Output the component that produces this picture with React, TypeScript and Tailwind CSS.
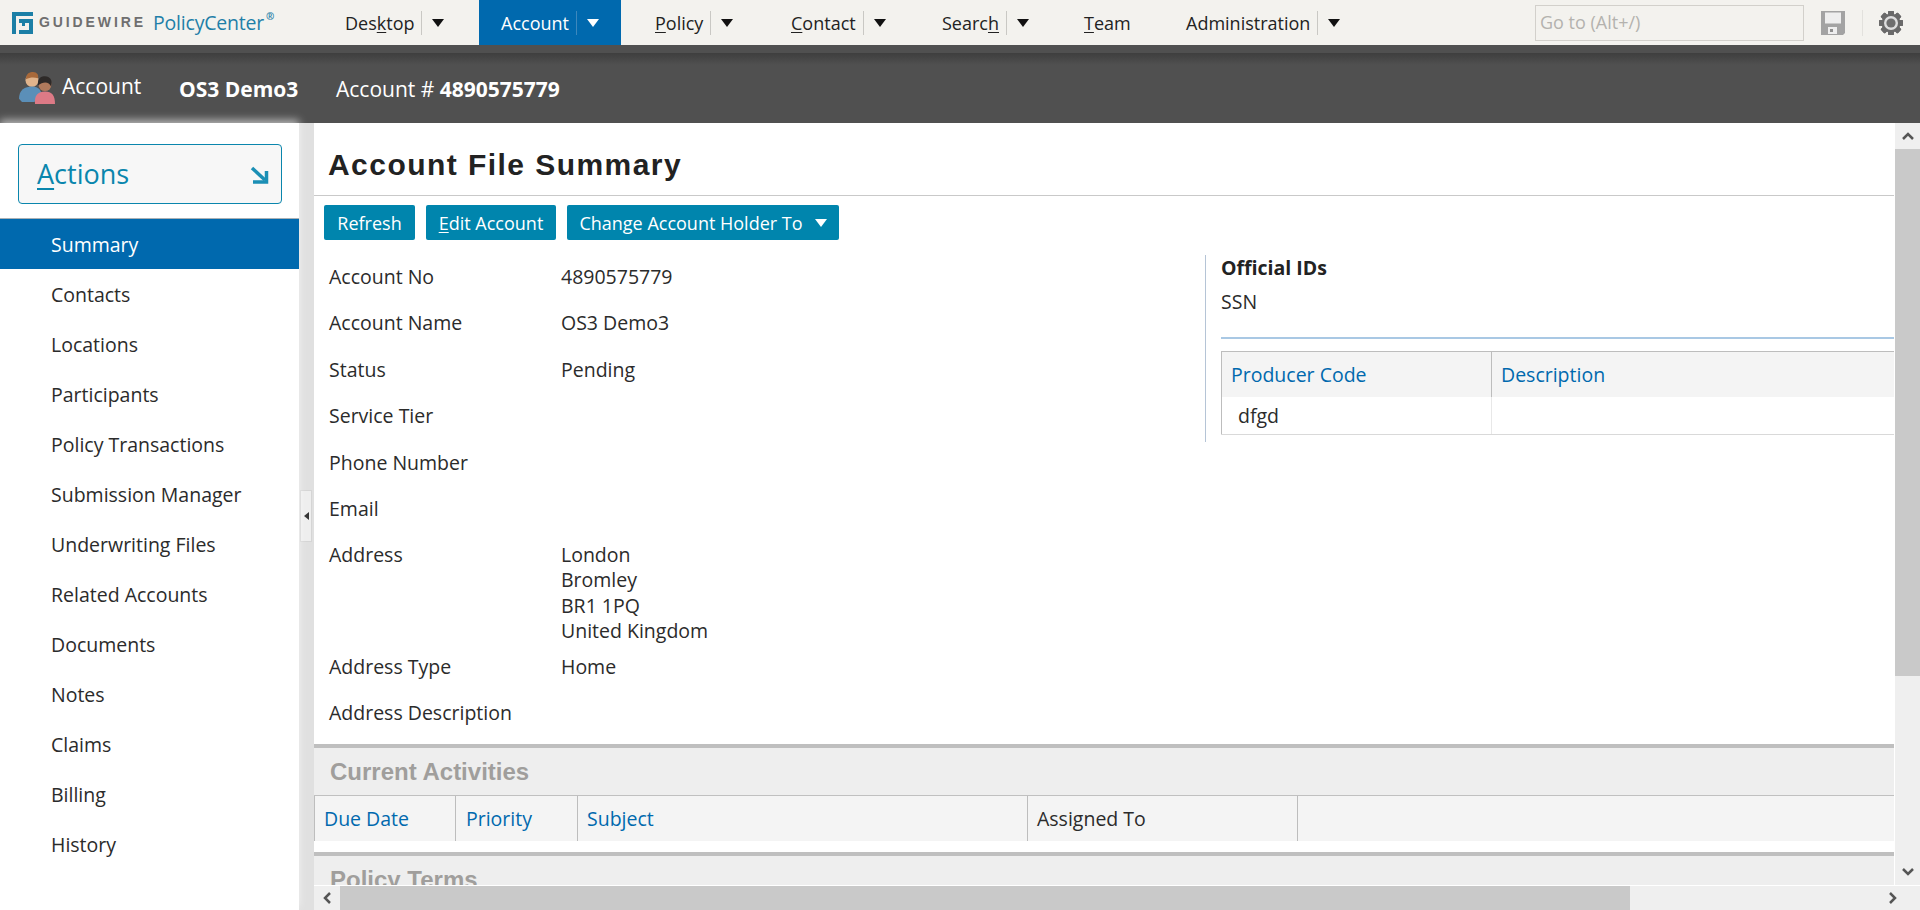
function Caret({ white }: { white?: boolean }) {
  return (
    <svg width="12" height="8" viewBox="0 0 12 8" className="block">
      <path d="M0 0H12L6 8Z" fill={white ? "#ffffff" : "#111111"} />
    </svg>
  );
}

function NavItem({
  pre,
  u,
  post,
  width,
  pad,
  caret,
  active,
}: {
  pre: string;
  u?: string;
  post?: string;
  width: string;
  pad: string;
  caret?: boolean;
  active?: boolean;
}) {
  return (
    <div className={`flex h-[45px] items-center ${width} ${pad} ${active ? "bg-[#0069ae] text-white" : "text-[#222222]"}`}>
      <span className="mt-[1px] whitespace-nowrap">
        {pre}
        {u ? <span className="underline underline-offset-2">{u}</span> : null}
        {post}
      </span>
      {caret ? (
        <>
          <span className={`ml-[7px] h-[24px] w-px ${active ? "bg-[#3d88bd]" : "bg-[#c9c8c4]"}`} />
          <span className="ml-[10px]">
            <Caret white={active} />
          </span>
        </>
      ) : null}
    </div>
  );
}

function PeopleIcon() {
  return (
    <svg width="38" height="34" viewBox="0 0 38 33" preserveAspectRatio="none" className="block">
      <circle cx="14" cy="9" r="6.5" fill="#e0b48c" />
      <path d="M8 8C8 2 12 1 15 1C19 1 21 4 20 7C16 6 12 6 8 8Z" fill="#a8693a" />
      <path d="M1 27C1 18 7 15 14 15C21 15 24 19 24 27L16 30L4 30Z" fill="#5b8fb8" />
      <circle cx="27" cy="13" r="6.5" fill="#b07a5c" />
      <path d="M20 14C19 6 24 5 27 5C32 5 35 9 33 15C31 10 25 10 20 14Z" fill="#2e2a28" />
      <path d="M17 32C16 24 20 20 27 20C34 20 37 24 37 32Z" fill="#dd7a86" />
    </svg>
  );
}

function Gear() {
  const teeth = [0, 45, 90, 135, 180, 225, 270, 315];
  return (
    <svg width="24" height="24" viewBox="0 0 24 24" className="block">
      {teeth.map((a) => (
        <rect key={a} x="9" y="0" width="6" height="24" rx="1" fill="#6a6a6a" transform={`rotate(${a} 12 12)`} />
      ))}
      <circle cx="12" cy="12" r="9.5" fill="#6a6a6a" />
      <circle cx="12" cy="12" r="7" fill="#dedede" />
      <circle cx="12" cy="12" r="4.6" fill="#6f6f6f" />
    </svg>
  );
}

function SaveIcon() {
  return (
    <svg width="24" height="24" viewBox="0 0 24 24" className="block">
      <path d="M0 0H24V22L22 24H0Z" fill="#a3a3a3" />
      <rect x="4" y="1.5" width="16" height="11" fill="#eeeeee" />
      <rect x="7" y="16" width="9" height="7" fill="#eeeeee" />
      <rect x="9" y="18" width="3" height="3" fill="#8f8f8f" />
    </svg>
  );
}

const SIDE = [
  "Contacts",
  "Locations",
  "Participants",
  "Policy Transactions",
  "Submission Manager",
  "Underwriting Files",
  "Related Accounts",
  "Documents",
  "Notes",
  "Claims",
  "Billing",
  "History",
];

function Field({ label, children, h }: { label: string; children?: React.ReactNode; h: string }) {
  return (
    <div className={`flex ${h} leading-[25.3px]`}>
      <div className="w-[232px] shrink-0">{label}</div>
      <div>{children}</div>
    </div>
  );
}

function HeadCell({ children, className }: { children: React.ReactNode; className: string }) {
  return <div className={`flex h-full items-center ${className}`}>{children}</div>;
}

export default function App() {
  return (
    <div className="flex h-[910px] w-[1920px] flex-col overflow-hidden bg-white font-['Open_Sans',sans-serif] text-[19.5px] text-[#2b2b2b]">
      <header className="flex h-[45px] shrink-0 items-center bg-[#f3f2ee] text-[18px]">
        <div className="flex w-[345px] shrink-0 items-center pl-[12px]">
          <svg width="21" height="22" viewBox="0 0 21 22" className="block shrink-0">
            <path d="M0 0H21V4H4V22H0Z M7 7H21V22H7V18H17V11H13V14H10V11H7Z" fill="#1b7fa6" fillRule="evenodd" />
          </svg>
          <span className="ml-[6px] font-['Liberation_Sans',sans-serif] text-[14px] font-bold tracking-[2.9px] text-[#6f6f6f]">GUIDEWIRE</span>
          <span className="relative ml-[7px] text-[19.5px] tracking-[-0.2px] text-[#1f7fa8]">
            PolicyCenter
            <span className="absolute -right-[10px] top-[1px] text-[10px] font-bold">®</span>
          </span>
        </div>
        <NavItem pre="Des" u="k" post="top" width="w-[134px]" pad="" caret />
        <NavItem pre="Account" width="w-[142px]" pad="pl-[22px]" caret active />
        <NavItem pre="" u="P" post="olicy" width="w-[136px]" pad="pl-[34px]" caret />
        <NavItem pre="" u="C" post="ontact" width="w-[151px]" pad="pl-[34px]" caret />
        <NavItem pre="Searc" u="h" width="w-[176px]" pad="pl-[34px]" caret />
        <NavItem pre="" u="T" post="eam" width="w-[102px]" pad="" />
        <NavItem pre="Administration" width="w-[349px]" pad="" caret />
        <div className="flex h-[36px] w-[269px] shrink-0 items-center border border-[#d2d0cb] pl-[4px] text-[#b4b2ae]">Go to (Alt+/)</div>
        <div className="ml-[17px]">
          <SaveIcon />
        </div>
        <span className="ml-[17px] h-[26px] w-px bg-[#e2e1dd]" />
        <div className="ml-[16px]">
          <Gear />
        </div>
      </header>

      <div className="flex h-[78px] shrink-0 flex-col bg-[#505050] text-white">
        <div className="mt-[8px] h-[12px] bg-gradient-to-b from-[#3e3e3e] to-[#505050]" />
        <div className="mt-[6px] flex items-start pl-[18px] text-[21px]">
          <PeopleIcon />
          <span className="ml-[6px] w-[117px]">Account</span>
          <span className="mt-[3px] w-[157px] font-bold">OS3 Demo3</span>
          <span className="mt-[3px]">
            Account # <b>4890575779</b>
          </span>
        </div>
      </div>

      <div className="flex min-h-0 flex-1">
        <aside className="relative z-10 w-[299px] shrink-0 bg-white pt-[21px] shadow-[0_-3px_8px_rgba(255,255,255,0.6)]">
          <div className="mx-[18px] flex h-[60px] w-[264px] items-center justify-between rounded-[4px] border border-[#0a86ad] bg-[#f7f7f7] pl-[18px] pr-[12px] pt-[1px] text-[27px] text-[#0a86ad]">
            <span>
              <span className="underline underline-offset-4">A</span>ctions
            </span>
            <svg width="19" height="18" viewBox="0 0 19 18" className="block">
              <path d="M2 2L15 14" stroke="#1b8fb5" strokeWidth="3.5" fill="none" />
              <path d="M16.5 5V16H3" stroke="#1b8fb5" strokeWidth="3.5" fill="none" />
            </svg>
          </div>
          <div className="mt-[14px] flex h-[51px] items-center border-t border-[#a9b0b5] bg-[#0069ae] pl-[51px] pt-[1px] text-white">Summary</div>
          {SIDE.map((s) => (
            <div key={s} className="flex h-[50px] items-center pl-[51px] pt-[1px] text-[#2b2b2b]">
              {s}
            </div>
          ))}
        </aside>

        <div className="relative w-[15px] shrink-0 bg-[#e0e0e0]">
          <div className="absolute left-[1px] top-[367px] flex h-[52px] w-[12px] items-center justify-start border border-[#d5d5d5] bg-[#eeeeee] pl-[3px]">
            <svg width="5" height="8" viewBox="0 0 5 8" className="block">
              <path d="M5 0V8L0 4Z" fill="#333333" />
            </svg>
          </div>
        </div>

        <div className="flex min-w-0 flex-1 flex-col">
          <div className="flex min-h-0 flex-1">
            <main className="min-w-0 flex-1 overflow-hidden">
              <h1 className="h-[73px] border-b border-[#c9c9c9] pl-[14px] pt-[22px] font-['Liberation_Sans',sans-serif] text-[30px] font-bold leading-[40px] tracking-[1.45px] text-[#222222]">
                Account File Summary
              </h1>
              <div className="ml-[10px] mt-[9px] flex gap-[11px] text-[18px] text-white">
                <div className="flex h-[35px] w-[91px] items-center justify-center rounded-[2px] bg-[#0085ad] pt-[1px]">Refresh</div>
                <div className="flex h-[35px] w-[130px] items-center justify-center rounded-[2px] bg-[#0085ad] pt-[1px]">
                  <span>
                    <span className="underline underline-offset-2">E</span>dit Account
                  </span>
                </div>
                <div className="flex h-[35px] w-[272px] items-center justify-center gap-[12px] rounded-[2px] bg-[#0085ad] pt-[1px]">
                  Change Account Holder To
                  <Caret white />
                </div>
              </div>

              <div className="flex h-[504px]">
                <div className="w-[891px] shrink-0 pl-[15px] pt-[24px]">
                  <Field label="Account No" h="h-[46px]">4890575779</Field>
                  <Field label="Account Name" h="h-[47px]">OS3 Demo3</Field>
                  <Field label="Status" h="h-[46px]">Pending</Field>
                  <Field label="Service Tier" h="h-[47px]" />
                  <Field label="Phone Number" h="h-[46px]" />
                  <Field label="Email" h="h-[46px]" />
                  <Field label="Address" h="h-[112px]">
                    <div>London</div>
                    <div>Bromley</div>
                    <div>BR1 1PQ</div>
                    <div>United Kingdom</div>
                  </Field>
                  <Field label="Address Type" h="h-[46px]">Home</Field>
                  <Field label="Address Description" h="h-[46px]" />
                </div>
                <div className="mt-[15px] h-[187px] flex-1 border-l border-[#b5c4d6] pl-[15px]">
                  <div className="font-bold leading-[25px] text-[#222222]">Official IDs</div>
                  <div className="mt-[9px] leading-[25px]">SSN</div>
                  <div className="mt-[23px] h-[2px] bg-[#a9c8e4]" />
                  <div className="mt-[12px] border-x-0 border-b border-t border-b-[#d9d9d9] border-t-[#bdbdbd]">
                    <div className="flex h-[45px] bg-[#f4f4f4] text-[#0069ae]">
                      <HeadCell className="w-[271px] border-x border-x-[#bdbdbd] pl-[9px]">Producer Code</HeadCell>
                      <HeadCell className="flex-1 pl-[9px]">Description</HeadCell>
                    </div>
                    <div className="flex h-[37px]">
                      <div className="flex w-[271px] items-center border-x border-l-[#bdbdbd] border-r-[#e8e8e8] pl-[16px]">dfgd</div>
                    </div>
                  </div>
                </div>
              </div>

              <section className="border-t-[4px] border-[#bfbfbf] bg-[#eeeeee]">
                <h2 className="flex h-[47px] items-center border-b-0 pl-[16px] font-['Liberation_Sans',sans-serif] text-[24px] font-bold text-[#a09e9c]">
                  Current Activities
                </h2>
                <div className="flex h-[46px] border-t border-[#c0c0c0] bg-[#f4f4f4]">
                  <HeadCell className="w-[142px] border-x border-x-[#bdbdbd] pl-[9px] text-[#0069ae]">Due Date</HeadCell>
                  <HeadCell className="w-[122px] border-r border-r-[#bdbdbd] pl-[10px] text-[#0069ae]">Priority</HeadCell>
                  <HeadCell className="w-[450px] border-r border-r-[#bdbdbd] pl-[9px] text-[#0069ae]">Subject</HeadCell>
                  <HeadCell className="w-[270px] border-r border-r-[#bdbdbd] pl-[9px]">Assigned To</HeadCell>
                </div>
              </section>
              <div className="h-[11px]" />
              <section className="h-[120px] border-t-[4px] border-[#bfbfbf] bg-[#eeeeee]">
                <h2 className="flex h-[47px] items-center pl-[16px] font-['Liberation_Sans',sans-serif] text-[24px] font-bold text-[#a09e9c]">
                  Policy Terms
                </h2>
              </section>
            </main>
            <div className="flex w-[26px] shrink-0 flex-col border-l border-white bg-[#efefef]">
              <div className="flex h-[26px] items-center justify-center">
                <svg width="12" height="8" viewBox="0 0 12 8" className="block">
                  <path d="M1 7L6 2L11 7" stroke="#555555" strokeWidth="2.5" fill="none" />
                </svg>
              </div>
              <div className="h-[527px] bg-[#c9c9c9]" />
              <div className="flex-1" />
              <div className="flex h-[26px] items-center justify-center">
                <svg width="12" height="8" viewBox="0 0 12 8" className="block">
                  <path d="M1 1L6 6L11 1" stroke="#555555" strokeWidth="2.5" fill="none" />
                </svg>
              </div>
            </div>
          </div>
          <div className="flex h-[25px] shrink-0 items-center border-t border-white bg-[#efefef]">
            <div className="flex h-full w-[26px] items-center justify-center">
              <svg width="8" height="12" viewBox="0 0 8 12" className="block">
                <path d="M7 1L2 6L7 11" stroke="#555555" strokeWidth="2.5" fill="none" />
              </svg>
            </div>
            <div className="h-full w-[1290px] bg-[#c9c9c9]" />
            <div className="flex-1" />
            <div className="flex h-full w-[40px] items-center justify-center pr-[14px]">
              <svg width="8" height="12" viewBox="0 0 8 12" className="block">
                <path d="M1 1L6 6L1 11" stroke="#555555" strokeWidth="2.5" fill="none" />
              </svg>
            </div>
          </div>
        </div>
      </div>
    </div>
  );
}
